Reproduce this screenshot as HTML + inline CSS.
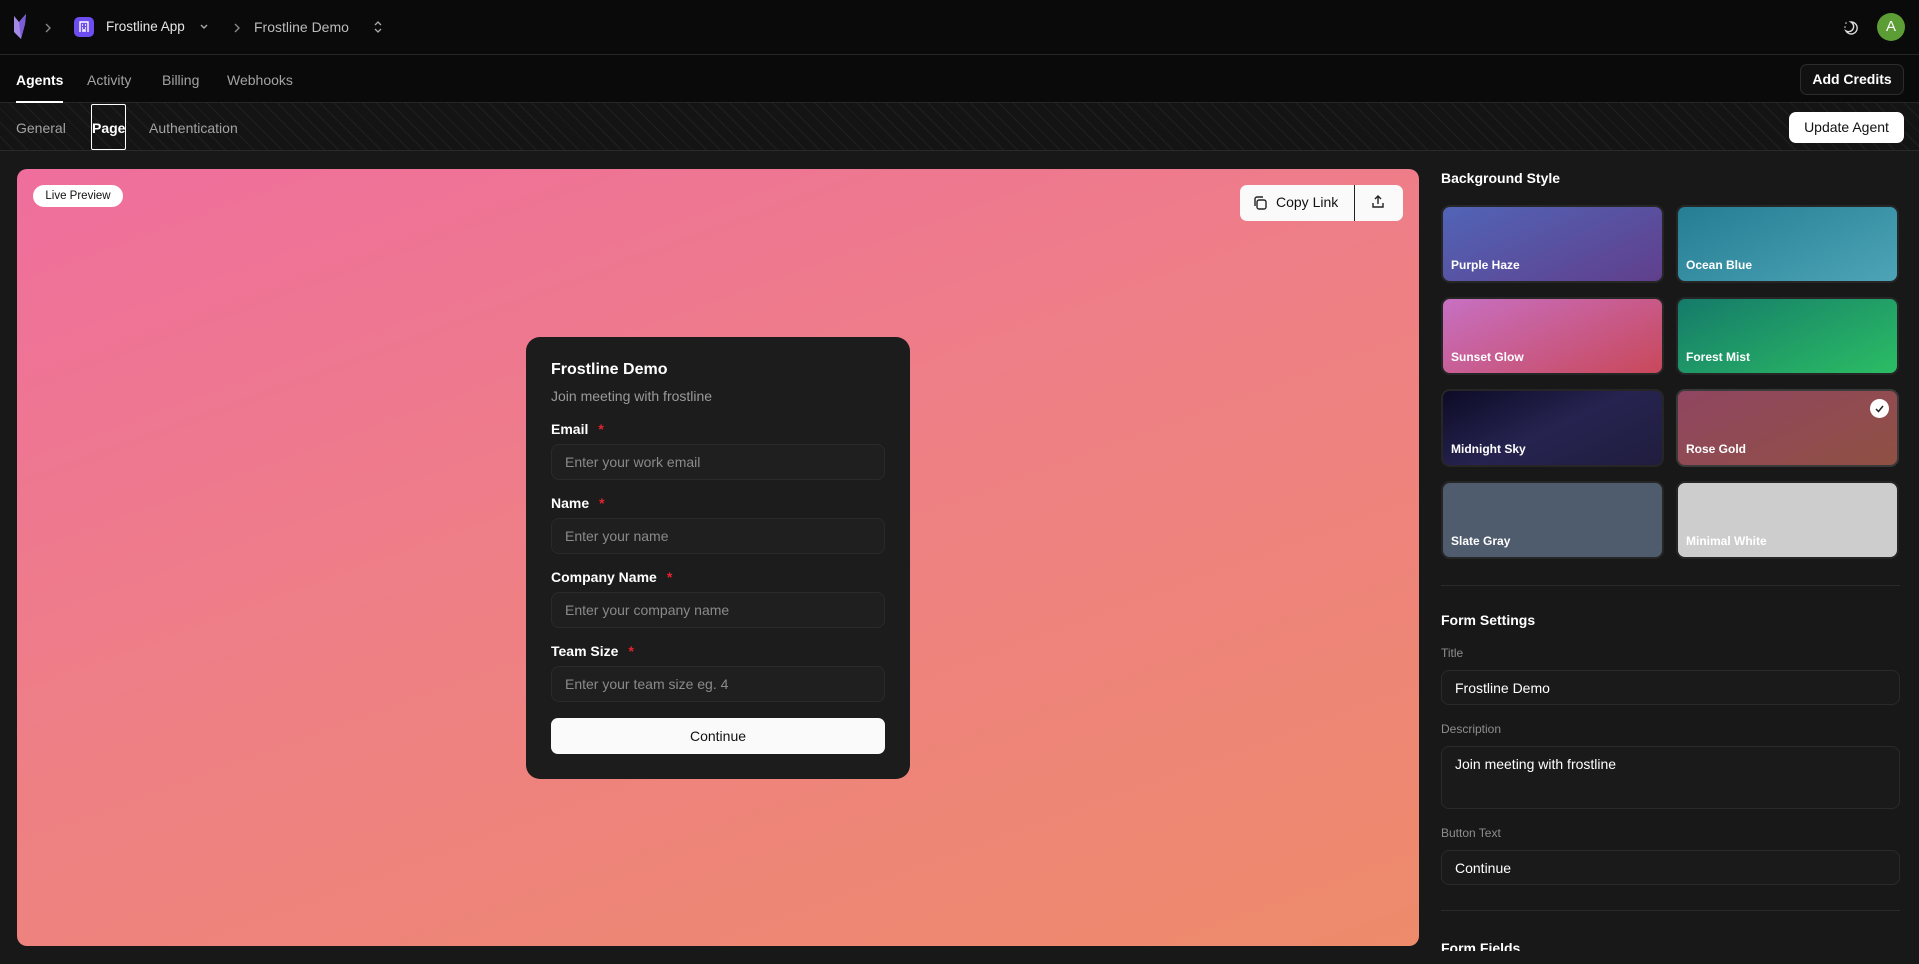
<!DOCTYPE html>
<html><head><meta charset="utf-8"><style>
*{box-sizing:border-box;margin:0;padding:0}
body{width:1919px;height:964px;overflow:hidden;background:#181818;font-family:"Liberation Sans",sans-serif;color:#eee;position:relative}
.abs{position:absolute}
.top{left:0;top:0;width:1919px;height:55px;background:#0a0a0a;border-bottom:1px solid #262626}
.tabs{left:0;top:55px;width:1919px;height:48px;background:#0a0a0a;border-bottom:1px solid #262626}
.sub{left:0;top:103px;width:1919px;height:48px;border-bottom:1px solid #2a2a2a;background:#141414 repeating-linear-gradient(45deg,transparent 0 9px,#202020 9px 10px)}
.t{font-size:14px;color:#a3a3a3;position:absolute}
.w{color:#fff}
.preview{left:17px;top:169px;width:1402px;height:777px;border-radius:10px;background:linear-gradient(160deg,#ef6e9d 0%,#ee7f86 45%,#ee8b6b 100%)}
.card{left:526px;top:337px;width:384px;height:442px;background:#1c1c1c;border-radius:14px}
.lbl{position:absolute;left:25px;font-size:14px;font-weight:bold;color:#fff}
.lbl b{color:#e5222e;margin-left:10px}
.inp{position:absolute;left:25px;width:334px;height:36px;border:1px solid #2a2a2a;border-radius:8px;background:#1f1f1f;font-size:14px;color:#8a8a8a;padding:9px 13px}
.sw{position:absolute;width:223px;height:78px;border-radius:9px;border:2px solid #262626;font-size:12px;font-weight:bold;color:#fff;padding:51px 0 0 8px}
.rl{position:absolute;left:1441px;font-size:12px;color:#8d8d8d}
.ri{position:absolute;left:1441px;width:459px;border:1px solid #2a2a2a;border-radius:8px;background:#1a1a1a;font-size:14px;color:#fff;padding:9px 13px}
.hd{position:absolute;left:1441px;font-size:14px;font-weight:bold;color:#fff}
</style></head><body>
<div class="abs top">
<svg class="abs" style="left:11px;top:12px" width="18" height="28" viewBox="0 0 18 28"><path d="M3 4 L8 10 L15 2 L14 12 L10 27 L3 20 Z" fill="#a48ae6"/><path d="M8 10 L15 2 L14 12 L10 27 Z" fill="#7b5cd6"/></svg>
<svg class="abs" style="left:44px;top:22px" width="8" height="12" viewBox="0 0 8 12"><path d="M2 2l4 4-4 4" stroke="#888" stroke-width="1.4" fill="none"/></svg>
<div class="abs" style="left:74px;top:17px;width:20px;height:20px;border-radius:5px;background:#6d4cf0"><svg width="20" height="20" viewBox="0 0 20 20"><path d="M6 15V5h8v10M8 8h1M11 8h1M8 11h1M11 11h1M9 15v-2h2v2" stroke="#fff" stroke-width="1.4" fill="none"/></svg></div>
<div class="t w" style="left:106px;top:19px;font-size:13.5px;color:#e5e5e5">Frostline App</div>
<svg class="abs" style="left:199px;top:23px" width="10" height="8" viewBox="0 0 10 8"><path d="M2 2l3 3 3-3" stroke="#aaa" stroke-width="1.4" fill="none"/></svg>
<svg class="abs" style="left:233px;top:22px" width="8" height="12" viewBox="0 0 8 12"><path d="M2 2l4 4-4 4" stroke="#888" stroke-width="1.4" fill="none"/></svg>
<div class="t" style="left:254px;top:19px;font-size:14px;color:#bbb">Frostline Demo</div>
<svg class="abs" style="left:372px;top:19px" width="12" height="16" viewBox="0 0 12 16"><path d="M3 6l3-3 3 3M3 10l3 3 3-3" stroke="#aaa" stroke-width="1.3" fill="none"/></svg>
<svg class="abs" style="left:1842px;top:19px" width="18" height="18" viewBox="0 0 18 18"><path d="M9 3a6 6 0 1 1-5 9 5 5 0 0 0 5-9z" stroke="#ddd" stroke-width="1.4" fill="none"/><circle cx="4" cy="4" r=".8" fill="#ddd"/><circle cx="3" cy="8" r=".8" fill="#ddd"/></svg>
<div class="abs" style="left:1877px;top:13px;width:28px;height:28px;border-radius:50%;background:#5d9d35;color:#fff;font-size:15px;text-align:center;line-height:28px">A</div>
</div>
<div class="abs tabs">
<div class="t w" style="left:16px;top:17px;font-weight:bold">Agents</div>
<div class="abs" style="left:16px;top:46px;width:47px;height:2px;background:#fff"></div>
<div class="t" style="left:87px;top:17px">Activity</div>
<div class="t" style="left:162px;top:17px">Billing</div>
<div class="t" style="left:227px;top:17px">Webhooks</div>
<div class="abs" style="left:1800px;top:9px;width:104px;height:31px;border:1px solid #2c2c2c;border-radius:7px;background:#111;font-size:14px;font-weight:bold;color:#fff;text-align:center;line-height:29px">Add Credits</div>
</div>
<div class="abs sub">
<div class="t" style="left:16px;top:17px">General</div>
<div class="abs" style="left:91px;top:1px;width:35px;height:46px;border:1.5px solid #fff;border-radius:2px"></div>
<div class="t w" style="left:92px;top:17px;font-weight:bold">Page</div>
<div class="t" style="left:149px;top:17px">Authentication</div>
<div class="abs" style="left:1789px;top:9px;width:115px;height:31px;border-radius:7px;background:#fff;font-size:14px;color:#111;text-align:center;line-height:31px">Update Agent</div>
</div>
<div class="abs preview">
<div class="abs" style="left:16px;top:16px;width:90px;height:22px;border-radius:11px;background:#fff;color:#111;font-size:11.5px;text-align:center;line-height:22px">Live Preview</div>
<div class="abs" style="left:1223px;top:16px;width:163px;height:36px;border-radius:7px;background:#fafafa">
<svg class="abs" style="left:12px;top:10px" width="16" height="16" viewBox="0 0 16 16"><rect x="5" y="5" width="9" height="9" rx="2" stroke="#222" stroke-width="1.4" fill="none"/><path d="M3 11V4a2 2 0 0 1 2-2h6" stroke="#222" stroke-width="1.4" fill="none"/></svg>
<div class="abs" style="left:36px;top:9px;font-size:14px;color:#111">Copy Link</div>
<div class="abs" style="left:114px;top:0;width:1px;height:36px;background:#222"></div>
<svg class="abs" style="left:130px;top:9px" width="16" height="16" viewBox="0 0 16 16"><path d="M8 10V2M5 5l3-3 3 3M3 9v4h10V9" stroke="#222" stroke-width="1.4" fill="none"/></svg>
</div>
</div>
<div class="abs card">
<div class="abs" style="left:25px;top:24px;font-size:16px;font-weight:bold;color:#fff">Frostline Demo</div>
<div class="abs" style="left:25px;top:51px;font-size:14px;color:#9a9a9a">Join meeting with frostline</div>
<div class="lbl" style="top:84px">Email<b>*</b></div>
<div class="inp" style="top:107px">Enter your work email</div>
<div class="lbl" style="top:158px">Name<b>*</b></div>
<div class="inp" style="top:181px">Enter your name</div>
<div class="lbl" style="top:232px">Company Name<b>*</b></div>
<div class="inp" style="top:255px">Enter your company name</div>
<div class="lbl" style="top:306px">Team Size<b>*</b></div>
<div class="inp" style="top:329px">Enter your team size eg. 4</div>
<div class="abs" style="left:25px;top:381px;width:334px;height:36px;border-radius:7px;background:#fafafa;color:#111;font-size:14px;text-align:center;line-height:36px">Continue</div>
</div>
<div class="hd" style="top:170px">Background Style</div>
<div class="sw" style="left:1441px;top:205px;background:linear-gradient(155deg,#5164b7,#603f8c)">Purple Haze</div>
<div class="sw" style="left:1676px;top:205px;background:linear-gradient(155deg,#257d94,#4da4b6)">Ocean Blue</div>
<div class="sw" style="left:1441px;top:297px;background:linear-gradient(155deg,#c770c3,#c9485a)">Sunset Glow</div>
<div class="sw" style="left:1676px;top:297px;background:linear-gradient(155deg,#157a6a,#2bbd64)">Forest Mist</div>
<div class="sw" style="left:1441px;top:389px;background:linear-gradient(155deg,#0d0b26,#262350,#201d3e)">Midnight Sky</div>
<div class="sw" style="left:1676px;top:389px;background:linear-gradient(155deg,#904661,#905043);border-color:#3a3a3a">Rose Gold<div class="abs" style="right:8px;top:8px;width:19px;height:19px;border-radius:50%;background:#fff"><svg width="19" height="19" viewBox="0 0 19 19"><path d="M6 10l2.5 2.5L13 7" stroke="#222" stroke-width="1.5" fill="none"/></svg></div></div>
<div class="sw" style="left:1441px;top:481px;background:#4f5c6d">Slate Gray</div>
<div class="sw" style="left:1676px;top:481px;background:#cdcdcd">Minimal White</div>
<div class="abs" style="left:1441px;top:585px;width:459px;height:1px;background:#2a2a2a"></div>
<div class="hd" style="top:612px">Form Settings</div>
<div class="rl" style="top:646px">Title</div>
<div class="ri" style="top:670px;height:35px">Frostline Demo</div>
<div class="rl" style="top:722px">Description</div>
<div class="ri" style="top:746px;height:63px">Join meeting with frostline</div>
<div class="rl" style="top:826px">Button Text</div>
<div class="ri" style="top:850px;height:35px">Continue</div>
<div class="abs" style="left:1441px;top:910px;width:459px;height:1px;background:#2a2a2a"></div>
<div class="abs" style="left:1441px;top:940px;height:11px;overflow:hidden;font-size:14px;font-weight:bold;color:#fff;line-height:16px">Form Fields</div>
</body></html>
